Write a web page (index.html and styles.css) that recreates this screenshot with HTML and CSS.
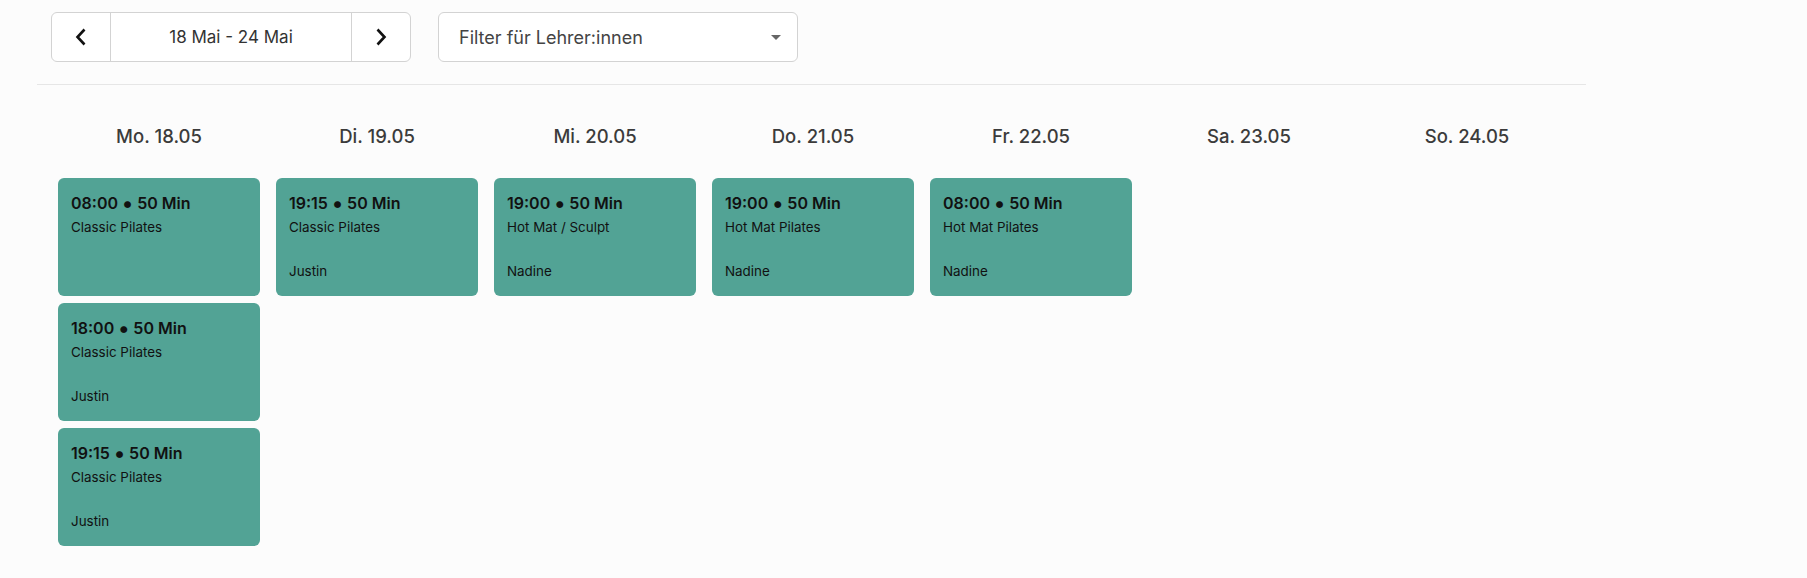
FILE: index.html
```html
<!DOCTYPE html>
<html lang="de">
<head>
    <meta charset="UTF-8">
    <meta name="viewport" content="width=device-width, initial-scale=1.0">
    <title>Stundenplan</title>
    <link rel="stylesheet" href="styles.css">
</head>
<body>

    <div class="schedule">
        <div class="toolbar">
            <div class="week-nav">
                <button class="nav-btn" title="Vorherige Woche">
                    <svg width="12" height="18" viewBox="0 0 12 18"><path d="M9.5 1.5 L2.5 9 L9.5 16.5" fill="none" stroke="#111" stroke-width="2.6"/></svg>
                </button>
                <div class="week-label">18 Mai - 24 Mai</div>
                <button class="nav-btn" title="Nächste Woche">
                    <svg width="12" height="18" viewBox="0 0 12 18"><path d="M2.5 1.5 L9.5 9 L2.5 16.5" fill="none" stroke="#111" stroke-width="2.6"/></svg>
                </button>
            </div>
            <div class="teacher-filter">
                <span>Filter für Lehrer:innen</span>
                <span class="caret"></span>
            </div>
        </div>

        <div class="week">
            <div class="day">
                <div class="day-head">Mo. 18.05</div>
                <div class="class-card">
                    <div class="class-time">08:00 <span class="dot">•</span> 50 Min</div>
                    <div class="class-name">Classic Pilates</div>
                </div>
                <div class="class-card">
                    <div class="class-time">18:00 <span class="dot">•</span> 50 Min</div>
                    <div class="class-name">Classic Pilates</div>
                    <div class="class-teacher">Justin</div>
                </div>
                <div class="class-card">
                    <div class="class-time">19:15 <span class="dot">•</span> 50 Min</div>
                    <div class="class-name">Classic Pilates</div>
                    <div class="class-teacher">Justin</div>
                </div>
            </div>
            <div class="day">
                <div class="day-head">Di. 19.05</div>
                <div class="class-card">
                    <div class="class-time">19:15 <span class="dot">•</span> 50 Min</div>
                    <div class="class-name">Classic Pilates</div>
                    <div class="class-teacher">Justin</div>
                </div>
            </div>
            <div class="day">
                <div class="day-head">Mi. 20.05</div>
                <div class="class-card">
                    <div class="class-time">19:00 <span class="dot">•</span> 50 Min</div>
                    <div class="class-name">Hot Mat / Sculpt</div>
                    <div class="class-teacher">Nadine</div>
                </div>
            </div>
            <div class="day">
                <div class="day-head">Do. 21.05</div>
                <div class="class-card">
                    <div class="class-time">19:00 <span class="dot">•</span> 50 Min</div>
                    <div class="class-name">Hot Mat Pilates</div>
                    <div class="class-teacher">Nadine</div>
                </div>
            </div>
            <div class="day">
                <div class="day-head">Fr. 22.05</div>
                <div class="class-card">
                    <div class="class-time">08:00 <span class="dot">•</span> 50 Min</div>
                    <div class="class-name">Hot Mat Pilates</div>
                    <div class="class-teacher">Nadine</div>
                </div>
            </div>
            <div class="day">
                <div class="day-head">Sa. 23.05</div>
            </div>
            <div class="day">
                <div class="day-head">So. 24.05</div>
            </div>
        </div>
    </div>

</body>
</html>
```

FILE: styles.css
```css
body {
    margin: 0;
    background-color: #fcfcfc;
    font-family: Inter, "Noto Sans", sans-serif;
    color: #111;
}

.schedule {
    margin-left: 37px;
    width: 1549px;
}

/* Top bar: week switcher + teacher filter */
.toolbar {
    display: flex;
    gap: 27px;
    padding: 12px 0 22px 14px;
    border-bottom: 1px solid #e6e6e6;
}

.week-nav {
    display: flex;
    width: 360px;
    height: 50px;
    box-sizing: border-box;
    border: 1px solid #d3d3d3;
    border-radius: 6px;
    background: #fff;
}

.nav-btn {
    width: 58px;
    padding: 0;
    border: none;
    background: none;
    display: flex;
    align-items: center;
    justify-content: center;
    cursor: pointer;
}

.week-label {
    flex: 1;
    display: flex;
    align-items: center;
    justify-content: center;
    border-left: 1px solid #d3d3d3;
    border-right: 1px solid #d3d3d3;
    font-size: 17px;
    color: #333;
}

.teacher-filter {
    width: 360px;
    height: 50px;
    box-sizing: border-box;
    border: 1px solid #d3d3d3;
    border-radius: 6px;
    background: #fff;
    padding: 0 16px 0 20px;
    display: flex;
    align-items: center;
    justify-content: space-between;
    font-size: 18px;
    color: #444;
}

.caret {
    width: 0;
    height: 0;
    border-left: 5px solid transparent;
    border-right: 5px solid transparent;
    border-top: 5px solid #666;
}

/* Week grid */
.week {
    display: grid;
    grid-template-columns: repeat(7, 202px);
    column-gap: 16px;
    padding: 39px 0 0 21px;
}

.day {
    display: flex;
    flex-direction: column;
    gap: 7px;
}

.day-head {
    text-align: center;
    font-size: 18.5px;
    line-height: 24px;
    font-weight: 500;
    color: #3b3b3b;
    margin-bottom: 23px;
}

.class-card {
    height: 118px;
    box-sizing: border-box;
    background-color: #52a395;
    border-radius: 6px;
    padding: 14px 13px 16px;
    display: flex;
    flex-direction: column;
}

.class-time {
    font-size: 16px;
    line-height: 22px;
    font-weight: 600;
}

.class-time .dot {
    font-size: 22px;
    line-height: 0;
    vertical-align: -2px;
}

.class-name {
    font-size: 13.4px;
    line-height: 18px;
    margin-top: 4px;
}

.class-teacher {
    font-size: 13.4px;
    line-height: 18px;
    margin-top: auto;
}
```
